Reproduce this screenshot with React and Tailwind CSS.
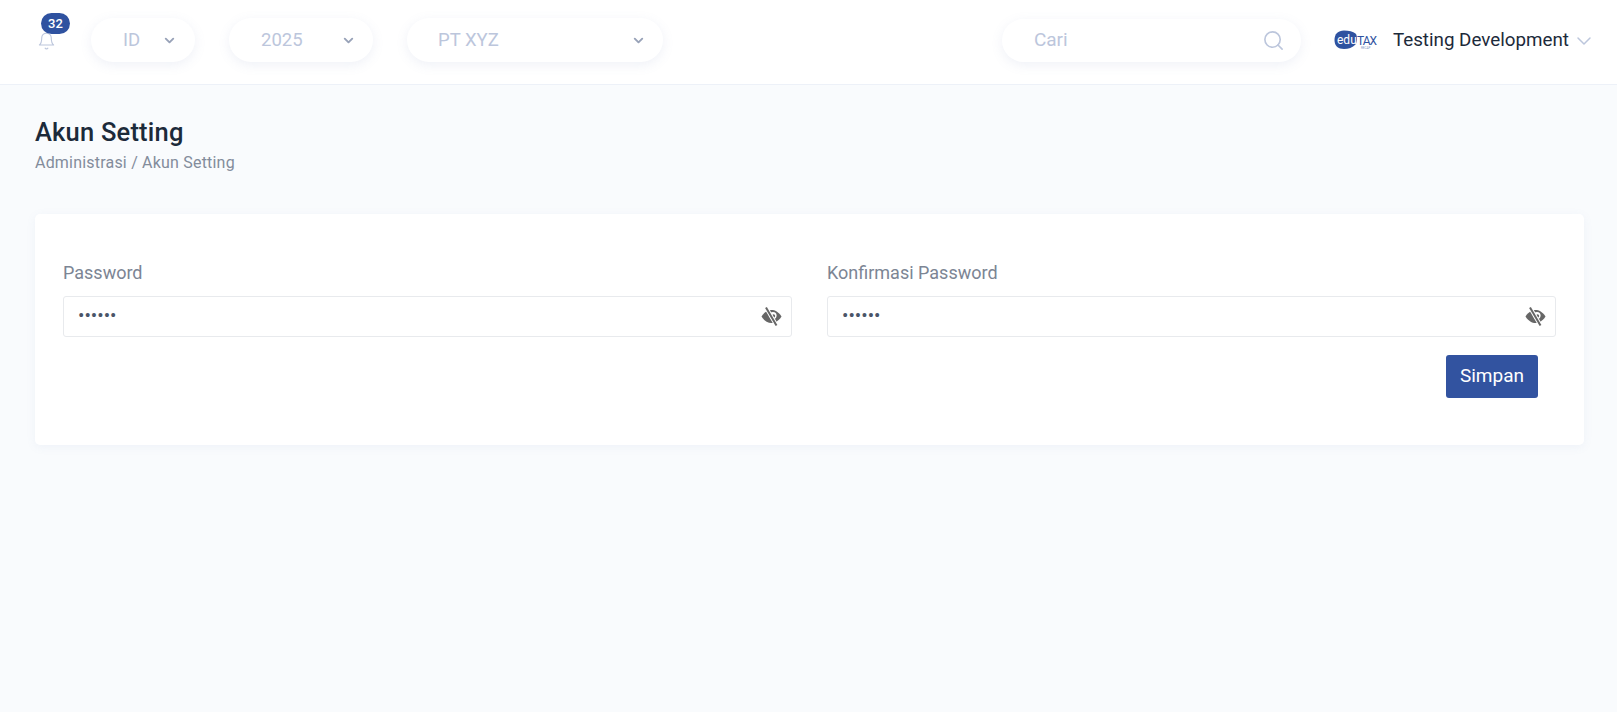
import { FiBell, FiChevronDown, FiSearch } from "react-icons/fi";

const font = "font-['Roboto',sans-serif]";

// Pill shaped select used in the top bar
const PillSelect = ({ label, width, labelPad, chevronPad }) => (
	<div
		className={`flex h-[44px] items-center justify-between rounded-full bg-white shadow-[0_3px_12px_rgba(120,140,190,0.12)] ${width} ${labelPad} ${chevronPad}`}
	>
		<span className="text-[18.5px] leading-none text-[#bcc6dc]">{label}</span>
		<FiChevronDown className="text-[#98a2b8]" size={15} strokeWidth={3} />
	</div>
);

const Logo = () => (
	<svg width="44" height="20" viewBox="0 0 44 20" className="shrink-0">
		<path
			d="M0.5 10C0.5 4 4 0.5 10 0.5c5 0 9 1 11.5 3 2 2 2 8 0 11-3 3-7 4.500-11.500 4.500C4 19 0.500 16 0.500 10z"
			fill="#2f52a0"
		/>
		<text x="3" y="13.5" fontSize="12" fill="#ffffff" fontFamily="Roboto, sans-serif">
			edu
		</text>
		<text x="23" y="15" fontSize="12" fill="#2f52a0" fontFamily="Roboto, sans-serif" textLength="20">
			TAX
		</text>
		<text x="27" y="18.5" fontSize="3" fill="#7f95c6" fontFamily="Roboto, sans-serif">
			RECAP
		</text>
	</svg>
);

const EyeOff = () => (
	<svg width="21" height="19" viewBox="0 0 21 19" className="shrink-0">
		<path
			d="M0.500 9.500C3.500 4.800 7 3 10.500 3s7 1.800 10 6.500c-3 4.700-6.500 6.500-10 6.500s-7-1.800-10-6.500z"
			fill="#666666"
		/>
		<circle cx="12" cy="8.500" r="3.600" fill="#ffffff" />
		<circle cx="12.500" cy="9" r="1.700" fill="#666666" />
		<path d="M5 0.500L15.500 18.500" stroke="#ffffff" strokeWidth="4" />
		<path d="M5 0.500L15.500 18.500" stroke="#666666" strokeWidth="2" />
	</svg>
);

const PasswordField = ({ label }) => (
	<div>
		<label className="mb-[12px] block text-[18px] leading-[22px] text-[#7c8594]">{label}</label>
		<div className="flex h-[41px] items-center rounded-[3px] border border-[#e8eaed] bg-white pl-[14px] pr-[9px]">
			<input
				type="password"
				value="123456"
				readOnly
				className="min-w-0 flex-1 text-[19px] text-[#4a5568] outline-none"
			/>
			<EyeOff />
		</div>
	</div>
);

const App = () => {
	return (
		<div className={`flex min-h-screen flex-col bg-[#f9fbfd] ${font}`}>
			<header className="flex h-[85px] items-center border-b border-[#edf1f8] bg-white pb-[4px] pl-[37px] pr-[21px]">
				<div className="relative mr-[35px] flex h-[44px] w-[19px] items-center">
					<FiBell className="mt-[2px] text-[#bcc6dc]" size={22} strokeWidth={1.4} />
					<span className="absolute left-[4px] top-[-5px] flex h-[21px] w-[29px] items-center justify-center rounded-full bg-[#2f52a0] text-[13px] font-medium text-white">
						32
					</span>
				</div>
				<div className="flex items-center gap-[34px]">
					<PillSelect label="ID" width="w-[104px]" labelPad="pl-[32px]" chevronPad="pr-[18px]" />
					<PillSelect label="2025" width="w-[144px]" labelPad="pl-[32px]" chevronPad="pr-[17px]" />
					<PillSelect label="PT XYZ" width="w-[256px]" labelPad="pl-[31px]" chevronPad="pr-[17px]" />
				</div>
				<div className="ml-auto flex h-[43px] w-[299px] items-center rounded-full bg-white pl-[32px] pr-[16px] shadow-[0_3px_12px_rgba(120,140,190,0.12)]">
					<input
						placeholder="Cari"
						className="min-w-0 flex-1 text-[19px] outline-none placeholder:text-[#bcc6dc]"
					/>
					<FiSearch className="text-[#bcc6dc]" size={23} strokeWidth={1.7} />
				</div>
				<div className="ml-[33px] flex items-center">
					<Logo />
					<span className="ml-[15px] text-[18.8px] text-[#1c2a3a]">Testing Development</span>
					<FiChevronDown className="ml-[3px] mt-[2px] text-[#bcc6dc]" size={24} strokeWidth={1.5} />
				</div>
			</header>

			<main className="pl-[35px] pr-[33px] pt-[32px]">
				<h1 className="text-[25.5px] font-medium leading-[30px] tracking-[0.2px] text-[#1c2a3a]">Akun Setting</h1>
				<p className="mt-[6px] text-[16px] leading-[20px] tracking-[0.2px] text-[#838c9b]">
					Administrasi / Akun Setting
				</p>

				<section className="mt-[41px] h-[231px] rounded-[5px] bg-white px-[28px] pt-[48px] shadow-[0_2px_10px_rgba(120,140,190,0.08)]">
					<div className="grid grid-cols-2 gap-[35px]">
						<PasswordField label="Password" />
						<PasswordField label="Konfirmasi Password" />
					</div>
					<div className="mr-[18px] mt-[18px] flex justify-end">
						<button
							type="button"
							className="h-[43px] w-[92px] rounded-[3px] bg-[#3253a0] text-[19px] text-white"
						>
							Simpan
						</button>
					</div>
				</section>
			</main>
		</div>
	);
};

export default App;
